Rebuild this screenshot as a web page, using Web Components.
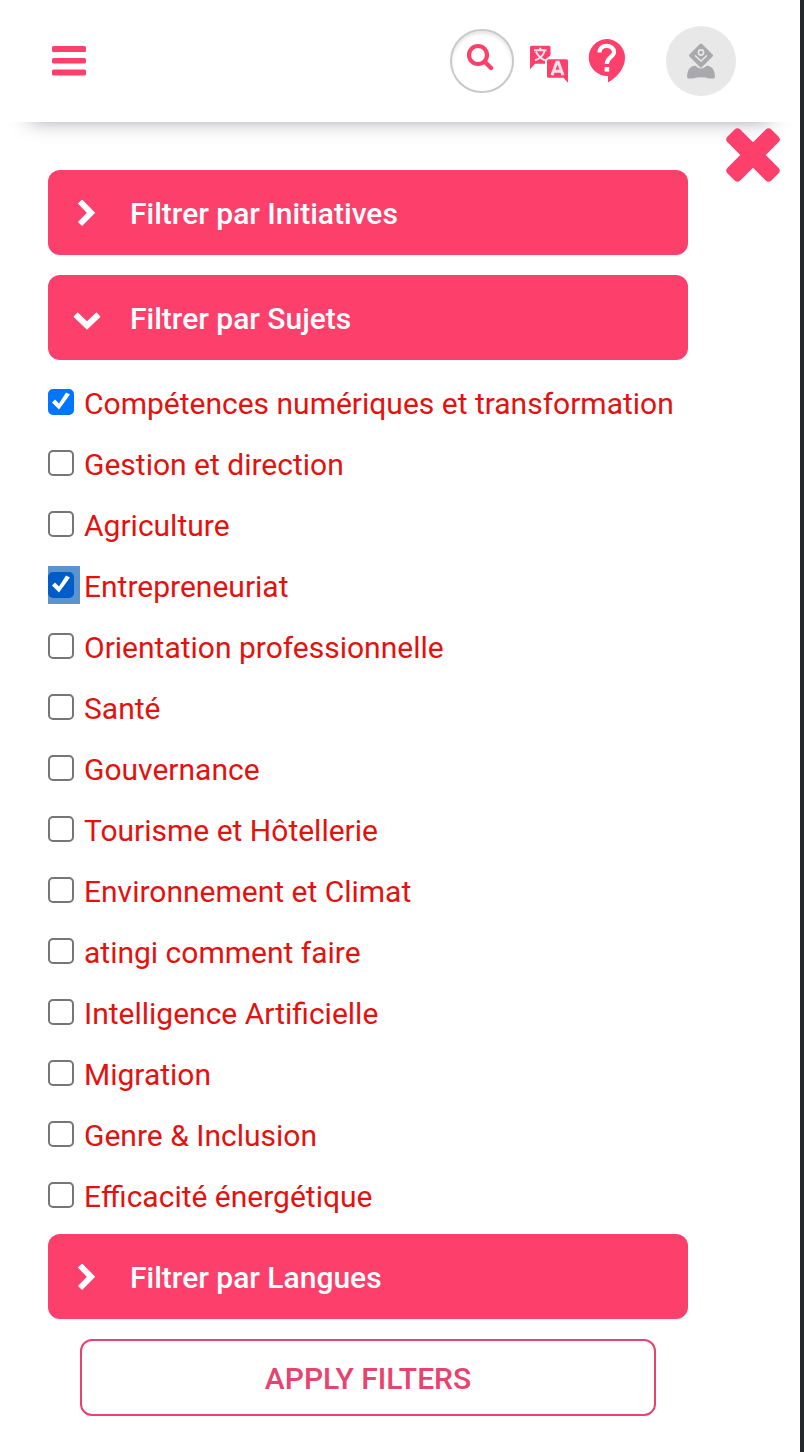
<!DOCTYPE html>
<html lang="fr">
<head>
<meta charset="utf-8">
<meta name="viewport" content="width=device-width, initial-scale=1">
<title>Filtres</title>
<style>
  body { margin: 0; background: #fff; font-family: Roboto, "Noto Sans", sans-serif; font-size: 30px; --pink: #fd3f6b; --label: #e3120f; }
</style>
</head>
<body>
<filter-page>
  <site-header slot="header"></site-header>
  <filter-section>Filtrer par Initiatives</filter-section>
  <filter-section open>Filtrer par Sujets
    <filter-option slot="options" checked>Compétences numériques et transformation</filter-option>
    <filter-option slot="options">Gestion et direction</filter-option>
    <filter-option slot="options">Agriculture</filter-option>
    <filter-option slot="options" checked active>Entrepreneuriat</filter-option>
    <filter-option slot="options">Orientation professionnelle</filter-option>
    <filter-option slot="options">Santé</filter-option>
    <filter-option slot="options">Gouvernance</filter-option>
    <filter-option slot="options">Tourisme et Hôtellerie</filter-option>
    <filter-option slot="options">Environnement et Climat</filter-option>
    <filter-option slot="options">atingi comment faire</filter-option>
    <filter-option slot="options">Intelligence Artificielle</filter-option>
    <filter-option slot="options">Migration</filter-option>
    <filter-option slot="options">Genre &amp; Inclusion</filter-option>
    <filter-option slot="options">Efficacité énergétique</filter-option>
  </filter-section>
  <filter-section>Filtrer par Langues</filter-section>
  <apply-button>APPLY FILTERS</apply-button>
</filter-page>

<script>
const define = (name, html, setup) => customElements.define(name, class extends HTMLElement {
  constructor() {
    super();
    const t = document.createElement('template');
    t.innerHTML = html;
    this.attachShadow({ mode: 'open' }).append(t.content.cloneNode(true));
  }
  connectedCallback() { if (setup) setup(this, this.shadowRoot); }
});

define('filter-page', `
<style>
  :host { display: block; min-height: 100vh; box-sizing: border-box; border-right: 4px solid #25282b; }
  main { display: grid; grid-template-columns: 1fr 54px; column-gap: 38px; align-items: start; padding: 6px 20px 36px 48px; }
  .filters { display: flex; flex-direction: column; gap: 20px; padding-top: 42px; }
  .close { display: block; border: 0; padding: 0; background: none; color: var(--pink); cursor: pointer; }
  .close svg { display: block; }
</style>
<slot name="header"></slot>
<main>
  <div class="filters"><slot></slot></div>
  <button class="close" type="button" aria-label="Fermer">
    <svg width="54" height="54" viewBox="0 0 54 54" aria-hidden="true"><g fill="currentColor" transform="rotate(45 27 27)"><rect x="-4" y="18" width="62" height="18" rx="4"/><rect x="18" y="-4" width="18" height="62" rx="4"/></g></svg>
  </button>
</main>`);

define('site-header', `
<style>
  :host { display: block; }
  header { display: flex; align-items: center; height: 122px; padding: 0 64px 0 52px; box-shadow: 0 28px 20px -30px rgba(45,45,65,.5); }
  button { display: block; flex: none; border: 0; padding: 0; background: none; color: var(--pink); cursor: pointer; }
  svg { display: block; }
  nav { display: flex; align-items: center; margin-left: auto; }
  .search { box-sizing: border-box; width: 64px; height: 64px; padding: 0 2px 8px 0; border: 2px solid #c9c9c9; border-radius: 50%; box-shadow: inset 0 3px 3px rgba(0,0,0,.09); }
  .search svg { margin: 0 auto; }
  .lang { margin-left: 16px; }
  .help { margin-left: 20px; }
  .user { margin-left: 40px; width: 70px; height: 70px; border-radius: 50%; background: #e8e8e8; }
  .user svg { margin: auto; }
</style>
<header>
  <button type="button" aria-label="Menu"><svg width="34" height="30" viewBox="0 0 34 30" fill="currentColor" aria-hidden="true"><rect y="0" width="34" height="6" rx="1.5"/><rect y="12" width="34" height="5.5" rx="1.5"/><rect y="23.5" width="34" height="6" rx="1.5"/></svg></button>
  <nav>
    <button class="search" type="button" aria-label="Rechercher"><svg width="30" height="28" viewBox="0 0 30 28" fill="none" stroke="currentColor" stroke-linecap="round" aria-hidden="true"><circle cx="12" cy="12" r="9" stroke-width="4.2"/><path d="M19 19l6 6" stroke-width="4.4"/></svg></button>
    <button class="lang" type="button" aria-label="Langue"><svg width="38" height="44" viewBox="0 0 38 44" aria-hidden="true"><g transform="translate(0 .8)">
      <path d="M1.500 6H19Q20.500 6 20.500 7.500V15.500L15 20V24H5L0 29.500V7.500Q0 6 1.500 6Z" fill="currentColor"/>
      <path d="M4 10.500H16.500M10.200 8V10.500M6 12Q9 18 15 20.500M14.500 11.500Q12.500 18 5 20.500" fill="none" stroke="#ffe3ea" stroke-width="2"/>
      <path d="M18.500 19.500H36.500Q38 19.500 38 21V43L33.500 38H18.500Q17 38 17 36.500V21Q17 19.500 18.500 19.500Z" fill="currentColor"/>
      <path d="M22 35.500L26.700 22.500H28.300L33 35.500M23.500 31.500H31.500" fill="none" stroke="#ffe3ea" stroke-width="3"/>
    </g></svg></button>
    <button class="help" type="button" aria-label="Aide"><svg width="38" height="44" viewBox="0 0 38 44" aria-hidden="true">
      <path d="M18.500 0A18.500 18.500 0 0 1 37 18.500C37 28 31 37 20 43.500V37A18.500 18.500 0 1 1 18.500 0Z" fill="currentColor"/>
      <path d="M11.500 13.500C11.500 9 14.500 6.800 18.600 6.800S26 9.500 26 13C26 18 18.800 18 18.800 25" fill="none" stroke="#fff" stroke-width="4.200"/><rect x="16.600" y="28" width="4.600" height="4.600" fill="#fff"/>
    </svg></button>
    <button class="user" type="button" aria-label="Profil"><svg width="28" height="36" viewBox="0 0 28 36" aria-hidden="true">
      <path d="M14 2L24.500 12.500L14 23L3.500 12.500Z" fill="#a9a9ad" stroke="#a9a9ad" stroke-width="3" stroke-linejoin="round"/>
      <path d="M8 12.500L14 18L20 12.500" fill="none" stroke="#e8e8e8" stroke-width="1.600"/>
      <circle cx="14" cy="9.500" r="2.600" fill="none" stroke="#e8e8e8" stroke-width="1.600"/>
      <path d="M5 23.500Q8 22 10 24Q14 27 18 24Q20 22 23 23.500Q28 26 28 34L27 35.500H22Q14 33 6 35.500H1L0 34Q0 26 5 23.500Z" fill="#a9a9ad"/>
    </svg></button>
  </nav>
</header>`);

define('filter-section', `
<style>
  :host { display: block; }
  :host([open]) { margin-bottom: -12px; }
  button { display: flex; align-items: center; gap: 29px; box-sizing: border-box; width: 100%; min-height: 85px; padding: 2px 25px 0; border: 0; border-radius: 12px; background: var(--pink); color: #fff; font: inherit; font-weight: 500; text-align: left; cursor: pointer; }
  svg { flex: none; }
  .down { display: none; }
  :host([open]) .down { display: block; }
  :host([open]) .right { display: none; }
  .options { display: none; padding-top: 12px; }
  :host([open]) .options { display: block; }
</style>
<button type="button" aria-expanded="false">
  <svg class="right" width="28" height="28" viewBox="0 0 28 28" fill="none" stroke="currentColor" stroke-width="6" aria-hidden="true"><path d="M7 1.500L18 12.800L7 24"/></svg>
  <svg class="down" width="28" height="28" viewBox="0 0 28 28" fill="none" stroke="currentColor" stroke-width="6" aria-hidden="true"><path d="M2.500 9.500L14 20.500L25.500 9.500"/></svg>
  <span><slot></slot></span>
</button>
<div class="options"><slot name="options"></slot></div>`, (host, root) => {
  const button = root.querySelector('button');
  button.setAttribute('aria-expanded', host.hasAttribute('open'));
  button.onclick = () => button.setAttribute('aria-expanded', host.toggleAttribute('open'));
});

define('filter-option', `
<style>
  :host { display: block; color: var(--label); }
  label { display: flex; align-items: center; box-sizing: border-box; min-height: 61px; padding-bottom: 2px; cursor: pointer; }
  .box { flex: none; padding: 6px 6px 6px 0; margin-right: 4px; }
  :host([active]) .box { background: #5b93cf; }
  input { appearance: none; display: block; box-sizing: border-box; width: 26px; height: 26px; margin: 0; border: 2px solid #767676; border-radius: 5px; background: #fff; }
  input:checked { border-color: #0075ff; background: #0075ff; }
  :host([active]) input { border-color: #005cc8; background: #005cc8; }
  input:checked::before { content: ""; display: block; width: 22px; height: 22px; background: #fff; clip-path: polygon(2px 12px, 5px 9px, 9px 13px, 16px 2px, 20px 4px, 9px 19px); }
  .text { padding-top: 4px; }
</style>
<label><span class="box"><input type="checkbox"></span><span class="text"><slot></slot></span></label>`, (host, root) => {
  root.querySelector('input').checked = host.hasAttribute('checked');
});

define('apply-button', `
<style>
  :host { display: block; padding: 0 32px; }
  button { display: block; box-sizing: border-box; width: 100%; min-height: 77px; padding: 2px 16px 0; border: 2px solid #e8426f; border-radius: 12px; background: #fff; color: #e8426f; font: inherit; font-weight: 500; cursor: pointer; }
</style>
<button type="button"><slot></slot></button>`);
</script>
</body>
</html>
